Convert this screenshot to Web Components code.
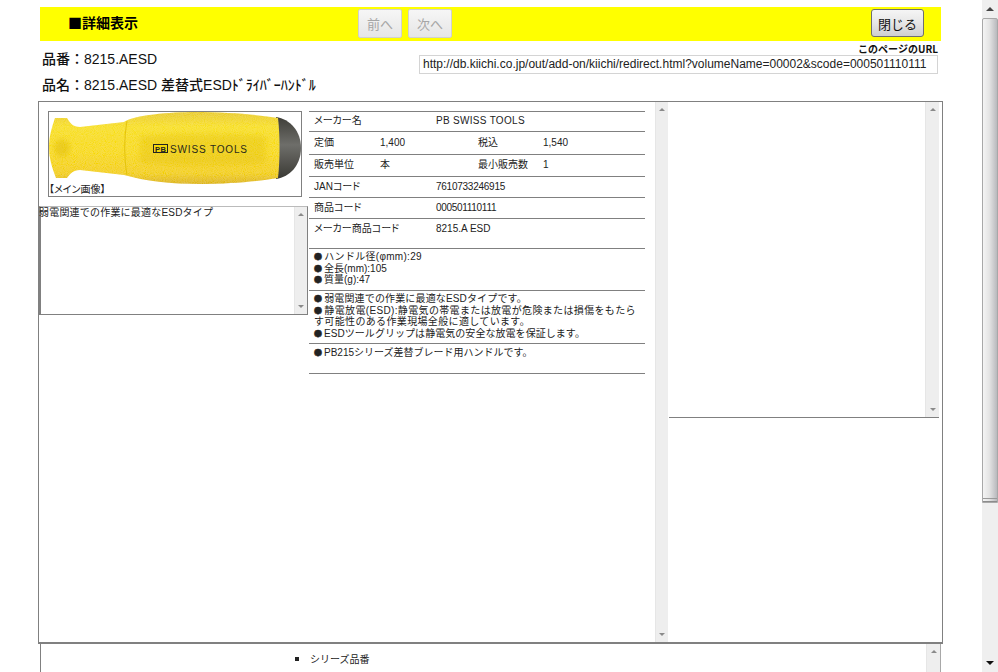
<!DOCTYPE html>
<html lang="ja">
<head>
<meta charset="utf-8">
<title>詳細表示</title>
<style>
  html, body { margin: 0; height: 100%; overflow: hidden; background: #fff; }
  body { font-family: "Liberation Sans", "Noto Sans CJK JP", sans-serif; font-size: 10px; color: #222; }
</style>
</head>
<body>
<template id="track-tpl">
  <style>
    :host { display: flex; flex-direction: column; justify-content: space-between; align-items: center;
      flex: none; width: 13px; background: #eeeeee; border-left: 1px solid #e6e6e6; box-sizing: border-box; padding: 6px 0; }
    i { width: 0; height: 0; border: 3px solid transparent; }
    .up { border-top: 0; border-bottom: 3px solid #8a8a8a; }
    .down { border-bottom: 0; border-top: 3px solid #8a8a8a; }
  </style>
  <i class="up"></i><i class="down"></i>
</template>

<script>
function shadow(el, html) {
  el.attachShadow({ mode: 'open' });
  el.shadowRoot.innerHTML = html;
}

class ScrollTrack extends HTMLElement {
  constructor() {
    super();
    this.attachShadow({ mode: 'open' });
    this.shadowRoot.appendChild(document.getElementById('track-tpl').content.cloneNode(true));
  }
}
customElements.define('scroll-track', ScrollTrack);

class PageScrollbar extends HTMLElement {
  constructor() {
    super();
    shadow(this, `<style>
      :host { display: flex; flex-direction: column; flex: none; width: 16px; height: 672px; background: #efefef; box-sizing: border-box; }
      .btn { flex: none; height: 18px; display: flex; align-items: center; justify-content: center; }
      .thumb { flex: none; height: 485px; box-sizing: border-box;
        background: linear-gradient(to right, #f4f4f4, #e4e4e4 45%, #b9b9bd);
        border: 1px solid #a8a8a8; border-top-left-radius: 2px; border-top-right-radius: 2px; }
      .grip { height: 2px; margin-top: 479px; border-top: 1px solid #9a9a9a; border-bottom: 1px solid #8c8c8c; }
      .fill { flex: 1; }
      i { width: 0; height: 0; border: 4px solid transparent; }
      .up { border-top: 0; border-bottom: 4px solid #444; }
      .down { border-bottom: 0; border-top: 4px solid #111; }
    </style>
    <div class="btn"><i class="up"></i></div>
    <div class="thumb"><div class="grip"></div></div>
    <div class="fill"></div>
    <div class="btn"><i class="down"></i></div>`);
  }
}
customElements.define('page-scrollbar', PageScrollbar);

class ToolBtn extends HTMLElement {
  constructor() {
    super();
    shadow(this, `<style>
      :host { display: flex; align-items: center; justify-content: center; box-sizing: border-box; height: 29px; width: 44px;
        font: 13px "Liberation Sans", "Noto Sans CJK JP", sans-serif; color: #a6a6a6;
        background: linear-gradient(#f6f6f6, #e6e6e6); border: 1px solid #d0d0d0; border-radius: 2px; }
      :host([primary]) { width: 53px; height: 28px; color: #111; border-color: #6f6f6f;
        background: linear-gradient(#f5f5f5, #e6e6e6 50%, #cfcfcf); border-radius: 3px; }
    </style><slot></slot>`);
  }
}
customElements.define('tool-btn', ToolBtn);

class TitleBar extends HTMLElement {
  constructor() {
    super();
    shadow(this, `<style>
      :host { display: flex; align-items: flex-start; box-sizing: border-box; height: 34px; margin: 7px 41px 0 40px;
        padding: 2px 17px 0 28px; background: #ffff00; }
      .title { width: 290px; padding-top: 4px; font: 700 14px/18px "Noto Sans CJK JP", sans-serif; color: #000; }
      .nav { display: flex; gap: 6px; flex: 1; }
    </style>
    <div class="title">■詳細表示</div>
    <div class="nav"><tool-btn>前へ</tool-btn><tool-btn>次へ</tool-btn></div>
    <tool-btn primary>閉じる</tool-btn>`);
  }
}
customElements.define('title-bar', TitleBar);

class ItemHead extends HTMLElement {
  constructor() {
    super();
    shadow(this, `<style>
      :host { display: flex; justify-content: space-between; height: 60px; margin: 0 44px 0 42px; color: #111; }
      .names { padding-top: 5px; font: 500 14px/26px "Liberation Sans", "Noto Sans CJK JP", sans-serif; }
      .url { width: 519px; padding-top: 2px; }
      .cap { font: 700 10px/12px "Noto Sans CJK JP", sans-serif; text-align: right; color: #111; }
      .box { box-sizing: border-box; height: 19px; padding-left: 3px; border: 1px solid #d4d4d4;
        font: 12px/17px "Liberation Sans", sans-serif; color: #222; white-space: nowrap; overflow: hidden; }
    </style>
    <div class="names">
      <div>品番：8215.AESD</div>
      <div>品名：8215.AESD 差替式ESDﾄﾞﾗｲﾊﾞｰﾊﾝﾄﾞﾙ</div>
    </div>
    <div class="url">
      <div class="cap">このページのURL</div>
      <div class="box">http://db.kiichi.co.jp/out/add-on/kiichi/redirect.html?volumeName=00002&amp;scode=000501110111</div>
    </div>`);
  }
}
customElements.define('item-head', ItemHead);

class ProductImage extends HTMLElement {
  constructor() {
    super();
    shadow(this, `<style>
      :host { display: block; box-sizing: border-box; width: 254px; height: 86px; margin-left: 9px; border: 1px solid #808080; }
      svg { display: block; }
      .cap { font: 10px/12px "Liberation Sans", "Noto Sans CJK JP", sans-serif; font-feature-settings: "palt"; color: #222; }
    </style>
    <svg width="252" height="72" viewBox="49 112 252 72">
      <defs>
        <linearGradient id="y" x1="0" y1="0" x2="0" y2="1">
          <stop offset="0" stop-color="#e9cb2a"/><stop offset=".2" stop-color="#f8e01e"/>
          <stop offset=".55" stop-color="#f8da06"/><stop offset=".85" stop-color="#f3cf04"/><stop offset="1" stop-color="#dcb408"/>
        </linearGradient>
        <linearGradient id="g" x1="0" y1="0" x2="0" y2="1">
          <stop offset="0" stop-color="#3f3e38"/><stop offset=".45" stop-color="#6e6e6a"/><stop offset="1" stop-color="#3a3934"/>
        </linearGradient>
        <filter id="speck" x="0" y="0" width="100%" height="100%">
          <feTurbulence type="fractalNoise" baseFrequency="1.1" numOctaves="1" seed="4" result="n"/>
          <feColorMatrix in="n" type="matrix" values="0 0 0 0 1  0 0 0 0 .95  0 0 0 0 .5  0 0 0 .3 -.08" result="c"/>
          <feComposite in="c" in2="SourceAlpha" operator="in" result="d"/>
          <feMerge><feMergeNode in="SourceGraphic"/><feMergeNode in="d"/></feMerge>
        </filter>
        <filter id="soft" x="-10%" y="-30%" width="120%" height="160%"><feGaussianBlur stdDeviation="2.5"/></filter>
      </defs>
      <path fill="url(#g)" d="M276 117 C290 119 301 131 301 148 C301 165 290 177 276 179 Z"/>
      <path filter="url(#speck)" fill="url(#y)" d="M55 118 L67 118 C70 123 73 127 80 127 L124 122 C134 115 170 112 195 112 C230 112 260 115 278 118 C280 135 280 160 278 178 C260 181 235 184 200 184 C170 184 145 181 124 175 L80 170 C73 170 70 174 67 178 L56 178 C52 168 49 158 49 148 C49 136 52 127 55 118 Z"/>
      <path filter="url(#soft)" fill="#d9b406" opacity=".25" d="M140 136 C175 133 235 133 266 136 L266 163 C235 166 175 166 140 163 Z"/>
      <ellipse filter="url(#soft)" cx="62" cy="148" rx="8" ry="9" fill="#d9b406" opacity=".4"/>
      <path fill="none" stroke="#e4c30a" d="M127 121 C124 138 124 158 127 175"/>
      <rect x="153.5" y="144.5" width="14" height="8" fill="#f4d60a" stroke="#222"/>
      <text x="155" y="151.6" font-family="Liberation Sans" font-size="7.5" font-weight="700" fill="#222" textLength="11">PB</text>
      <text x="170" y="152.5" font-family="Liberation Sans" font-size="10" fill="#2a2a1a" textLength="77">SWISS TOOLS</text>
    </svg>
    <div class="cap">【メイン画像】</div>`);
  }
}
customElements.define('product-image', ProductImage);

class MemoBox extends HTMLElement {
  constructor() {
    super();
    shadow(this, `<style>
      :host { display: flex; box-sizing: border-box; width: 269px; height: 109px; margin-top: 9px;
        border: 1px solid #808080; border-left-width: 2px; border-top-color: #bbb; }
      .txt { flex: 1; font: 10px/11px "Liberation Sans", "Noto Sans CJK JP", sans-serif; letter-spacing: .2px; color: #222; margin-left: -2px; }
    </style>
    <div class="txt"><slot></slot></div><scroll-track></scroll-track>`);
  }
}
customElements.define('memo-box', MemoBox);

class SpecTable extends HTMLElement {
  constructor() {
    super();
    shadow(this, `<style>
      :host { display: block; width: 336px; margin-top: 9px; border-bottom: 1px solid #808080; }
    </style><slot></slot>`);
  }
}
customElements.define('spec-table', SpecTable);

class SpecRow extends HTMLElement {
  constructor() {
    super();
    shadow(this, `<style>
      :host { display: grid; grid-template-columns: 122px 1fr; align-items: center; box-sizing: border-box;
        border-top: 1px solid #808080; padding: 0 0 1px 5px;
        font: 10px/12px "Liberation Sans", "Noto Sans CJK JP", sans-serif; font-feature-settings: "palt"; color: #222; }
      :host([split]) { grid-template-columns: 66px 98px 65px 1fr; }
      :host([note]) { display: block; padding: 2px 0 0 5px; line-height: 11.5px; font-feature-settings: normal; white-space: nowrap; }
    </style><slot></slot>`);
  }
}
customElements.define('spec-row', SpecRow);

// one line of a note, with a bigger bullet than the Liberation glyph
class NoteLine extends HTMLElement {
  constructor() {
    super();
    shadow(this, `<style>
      :host { display: block; height: 11.5px; }
      i { font: normal 8px/11.5px "Noto Sans CJK JP", sans-serif; margin-right: 2px; -webkit-text-stroke: .5px #222; }
      :host([plain]) i { display: none; }
    </style><i>●</i><slot></slot>`);
  }
}
customElements.define('note-line', NoteLine);

class MainPanel extends HTMLElement {
  constructor() {
    super();
    shadow(this, `<style>
      :host { display: flex; box-sizing: border-box; height: 543px; margin: 0 39px 0 38px;
        border: 1px solid #808080; border-bottom-width: 2px; }
      .left { flex: none; width: 270px; padding-top: 9px; }
      .mid { flex: none; width: 346px; }
      .right { flex: none; width: 270px; margin-left: 1px; display: flex; flex-direction: column; }
      .top { flex: none; height: 316px; display: flex; justify-content: flex-end; box-sizing: border-box; border-bottom: 1px solid #808080; }
    </style>
    <div class="left"><slot name="left"></slot></div>
    <div class="mid"><slot name="mid"></slot></div>
    <scroll-track></scroll-track>
    <div class="right"><div class="top"><scroll-track style="width:14px"></scroll-track></div></div>`);
  }
}
customElements.define('main-panel', MainPanel);

class SeriesPanel extends HTMLElement {
  constructor() {
    super();
    shadow(this, `<style>
      :host { display: flex; box-sizing: border-box; height: 80px; margin: 0 41px 0 40px;
        border-left: 1px solid #808080; border-right: 1px solid #a8a8a8; }
      ul { flex: 1; margin: 0; padding: 9px 0 0 269px; list-style: square;
        font: 10px/12px "Noto Sans CJK JP", sans-serif; color: #222; }
      scroll-track { width: 14px; }
    </style>
    <ul><li>シリーズ品番</li></ul><scroll-track></scroll-track>`);
  }
}
customElements.define('series-panel', SeriesPanel);

class DetailPage extends HTMLElement {
  constructor() {
    super();
    shadow(this, `<style>
      :host { display: flex; width: 998px; height: 672px; overflow: hidden; }
      .content { flex: 1; min-width: 0; overflow: hidden; }
    </style>
    <div class="content"><slot></slot></div>
    <page-scrollbar></page-scrollbar>`);
  }
}
customElements.define('detail-page', DetailPage);
</script>

<detail-page>
  <title-bar></title-bar>
  <item-head></item-head>
  <main-panel>
    <div slot="left">
      <product-image></product-image>
      <memo-box>弱電関連での作業に最適なESDタイプ</memo-box>
    </div>
    <spec-table slot="mid">
      <spec-row style="height:20px;padding-bottom:2px"><div>メーカー名</div><div style="letter-spacing:.3px">PB SWISS TOOLS</div></spec-row>
      <spec-row split style="height:23px"><div>定価</div><div>1,400</div><div>税込</div><div>1,540</div></spec-row>
      <spec-row split style="height:22px"><div>販売単位</div><div>本</div><div>最小販売数</div><div>1</div></spec-row>
      <spec-row style="height:21px"><div>JANコード</div><div style="letter-spacing:-.25px">7610733246915</div></spec-row>
      <spec-row style="height:21px"><div>商品コード</div><div style="letter-spacing:-.3px">000501110111</div></spec-row>
      <spec-row style="height:30px;padding-bottom:10px"><div>メーカー商品コード</div><div>8215.A ESD</div></spec-row>
      <spec-row note style="height:42px">
        <note-line style="letter-spacing:.3px">ハンドル径(φmm):29</note-line>
        <note-line>全長(mm):105</note-line>
        <note-line>質量(g):47</note-line>
      </spec-row>
      <spec-row note style="height:53px">
        <note-line style="letter-spacing:.15px">弱電関連での作業に最適なESDタイプです。</note-line>
        <note-line style="letter-spacing:.35px">静電放電(ESD):静電気の帯電または放電が危険または損傷をもたら</note-line>
        <note-line plain style="letter-spacing:.35px">す可能性のある作業現場全般に適しています。</note-line>
        <note-line style="letter-spacing:.05px">ESDツールグリップは静電気の安全な放電を保証します。</note-line>
      </spec-row>
      <spec-row note style="height:30px;padding-top:3px">
        <note-line>PB215シリーズ差替ブレード用ハンドルです。</note-line>
      </spec-row>
    </spec-table>
  </main-panel>
  <series-panel></series-panel>
</detail-page>
</body>
</html>
